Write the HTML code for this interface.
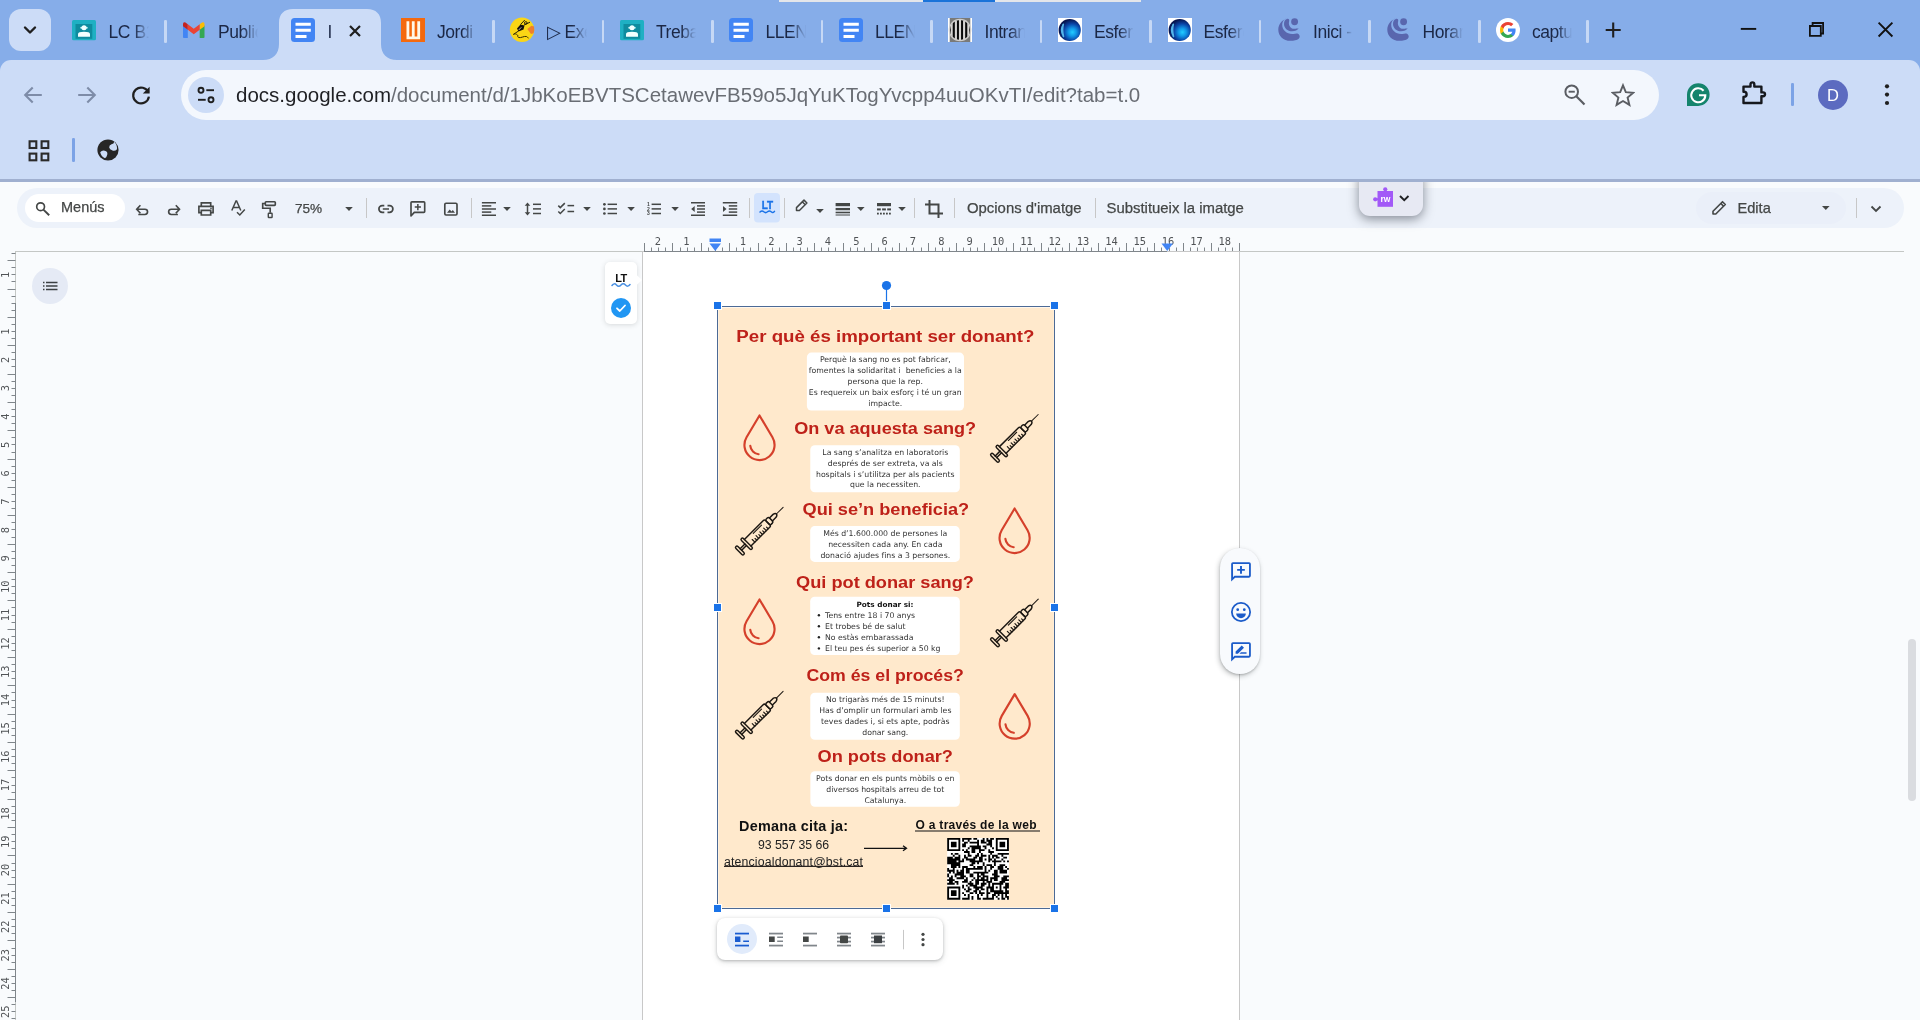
<!DOCTYPE html><html lang="ca"><head><meta charset="utf-8"><title>Docs</title><style>
*{box-sizing:border-box;margin:0;padding:0}
html,body{width:1920px;height:1020px;overflow:hidden;background:#F9FBFD;font-family:"Liberation Sans",sans-serif;}
.abs{position:absolute}
#frame{position:absolute;left:0;top:0;width:1920px;height:80px;background:#86ADE9}
#tb{position:absolute;left:0;top:60px;width:1920px;height:120px;background:#CCDCF7;border-radius:11px 11px 0 0}
#tbline{position:absolute;left:0;top:179.400px;width:1920px;height:2.400px;background:#A0B0D0}
.tabt{position:absolute;top:20px;height:24px;line-height:24px;font-size:17.5px;color:#1b2745;white-space:nowrap;overflow:hidden;letter-spacing:-0.45px}
.sep{position:absolute;top:19.5px;width:2.6px;height:23.500px;background:#C6D8F5;border-radius:1.300px}
.fav{position:absolute;top:18px;width:24px;height:24px}
#omni{position:absolute;left:180.500px;top:69.500px;width:1478.500px;height:50.500px;border-radius:25.250px;background:#F3F7FD}
#url{position:absolute;left:236px;top:80px;height:30px;line-height:30px;font-size:20.5px;color:#696D74;white-space:nowrap}
#url b{font-weight:normal;color:#1f2024}
#dtb{position:absolute;left:17px;top:188px;width:1887px;height:40px;border-radius:20px;background:#EDF2FA}
.dsep{position:absolute;top:198px;width:1px;height:20px;background:#C7C7C7}
.dtxt{position:absolute;top:198px;height:20px;line-height:20px;font-size:14px;color:#444746;white-space:nowrap;-webkit-text-stroke:0.250px #444746}
.ic{position:absolute}
</style></head><body><div id="root" style="position:absolute;left:0;top:0;width:1920px;height:1020px;will-change:transform">
<div id="frame"></div>
<div class="abs" style="left:779px;top:0;width:362px;height:2px;background:#E4E6EA"></div>
<div class="abs" style="left:923px;top:0;width:72px;height:2px;background:#1A73D9"></div>
<div id="tb"></div>
<div class="abs" style="left:9px;top:9px;width:42px;height:42px;border-radius:12px;background:#CCDCF7"></div>
<svg class="ic" style="left:20px;top:20px" width="20" height="20" viewBox="0 0 20 20"><path d="M5 7.5 L10 12.5 L15 7.5" fill="none" stroke="#1f1f1f" stroke-width="2.4" stroke-linecap="round" stroke-linejoin="round"/></svg>
<svg class="ic" style="left:263px;top:9px" width="134" height="51" viewBox="0 0 134 51"><path d="M0 51 C10 51 16 45 16 35 L16 14 C16 5 21 0 30 0 L104 0 C113 0 118 5 118 14 L118 35 C118 45 124 51 134 51 Z" fill="#CCDCF7"/></svg>
<!--TABS-->
<div class="tabt" style="left:108.5px;width:41px;-webkit-mask-image:linear-gradient(90deg,#000 25px,transparent 40px)">LC B1</div>
<div class="tabt" style="left:218px;width:41px;-webkit-mask-image:linear-gradient(90deg,#000 25px,transparent 40px)">Publicacions</div>
<div class="tabt" style="left:327.5px;width:8px;-webkit-mask-image:linear-gradient(90deg,#000 2px,transparent 7px)">I</div>
<div class="tabt" style="left:437px;width:41px;-webkit-mask-image:linear-gradient(90deg,#000 25px,transparent 40px)">Jordi</div>
<div class="tabt" style="left:546.5px;width:41px;-webkit-mask-image:linear-gradient(90deg,#000 25px,transparent 40px)">▷ Exercicis</div>
<div class="tabt" style="left:656px;width:41px;-webkit-mask-image:linear-gradient(90deg,#000 25px,transparent 40px)">Treballs</div>
<div class="tabt" style="left:765.5px;width:41px;-webkit-mask-image:linear-gradient(90deg,#000 25px,transparent 40px)">LLENGUA</div>
<div class="tabt" style="left:875px;width:41px;-webkit-mask-image:linear-gradient(90deg,#000 25px,transparent 40px)">LLENGUA</div>
<div class="tabt" style="left:984.5px;width:41px;-webkit-mask-image:linear-gradient(90deg,#000 25px,transparent 40px)">Intranet</div>
<div class="tabt" style="left:1094px;width:41px;-webkit-mask-image:linear-gradient(90deg,#000 25px,transparent 40px)">Esfer@</div>
<div class="tabt" style="left:1203.5px;width:41px;-webkit-mask-image:linear-gradient(90deg,#000 25px,transparent 40px)">Esfer@</div>
<div class="tabt" style="left:1313px;width:41px;-webkit-mask-image:linear-gradient(90deg,#000 25px,transparent 40px)">Inici -</div>
<div class="tabt" style="left:1422.5px;width:41px;-webkit-mask-image:linear-gradient(90deg,#000 25px,transparent 40px)">Horari</div>
<div class="tabt" style="left:1532px;width:41px;-webkit-mask-image:linear-gradient(90deg,#000 25px,transparent 40px)">captura</div>
<div class="sep" style="left:164.29999999999998px"></div>
<div class="sep" style="left:492.09999999999997px"></div>
<div class="sep" style="left:601.7px"></div>
<div class="sep" style="left:711.2px"></div>
<div class="sep" style="left:820.7px"></div>
<div class="sep" style="left:930.2px"></div>
<div class="sep" style="left:1039.7px"></div>
<div class="sep" style="left:1149.2px"></div>
<div class="sep" style="left:1258.7px"></div>
<div class="sep" style="left:1368.1000000000001px"></div>
<div class="sep" style="left:1478.1000000000001px"></div>
<div class="sep" style="left:1586.4px"></div>
<svg class="ic" style="left:72px;top:18px" width="24" height="24" viewBox="0 0 24 24"><rect x="0" y="2" width="24" height="20.200" rx="1.500" fill="#1FB0C3"/><rect x="3.500" y="6" width="16.800" height="14.800" fill="#0F8C9F"/><circle cx="12" cy="9.700" r="2.500" fill="#F2FFFF"/><circle cx="9.300" cy="9.700" r="1" fill="#D8F8FA"/><circle cx="14.700" cy="9.700" r="1" fill="#D8F8FA"/><path d="M6 18.700V16.200Q6 13.800 12 13.800T18 16.200V18.700Z" fill="#F2FFFF"/></svg>
<svg class="ic" style="left:620px;top:18px" width="24" height="24" viewBox="0 0 24 24"><rect x="0" y="2" width="24" height="20.200" rx="1.500" fill="#1FB0C3"/><rect x="3.500" y="6" width="16.800" height="14.800" fill="#0F8C9F"/><circle cx="12" cy="9.700" r="2.500" fill="#F2FFFF"/><circle cx="9.300" cy="9.700" r="1" fill="#D8F8FA"/><circle cx="14.700" cy="9.700" r="1" fill="#D8F8FA"/><path d="M6 18.700V16.200Q6 13.800 12 13.800T18 16.200V18.700Z" fill="#F2FFFF"/></svg>
<svg class="ic" style="left:183.2px;top:22px" width="21.5" height="16" viewBox="0 0 21.5 16"><path d="M0 3.200V15.200Q0 16 1 16H4.800V7.200Z" fill="#4285F4"/><path d="M21.500 3.200V15.200Q21.500 16 20.500 16H16.700V7.200Z" fill="#34A853"/><path d="M16.700 2.200L19 0.500Q21.500 -0.700 21.500 2.300V4.200L16.700 7.800Z" fill="#FBBC04"/><path d="M4.800 2.200L2.500 0.500Q0 -0.700 0 2.300V4.200L4.800 7.800Z" fill="#C5221F"/><path d="M4.800 2.200L10.750 6.700L16.700 2.200V7.800L10.750 12.300L4.800 7.800Z" fill="#EA4335"/></svg>
<svg class="ic" style="left:291px;top:18px" width="24" height="24" viewBox="0 0 24 24"><rect width="24" height="24" rx="3.500" fill="#4285F4"/><path d="M4.500 6.200H19.800M4.500 12.200H19.800M4.500 18.400H15.500" stroke="#fff" stroke-width="3"/></svg>
<svg class="ic" style="left:729px;top:18px" width="24" height="24" viewBox="0 0 24 24"><rect width="24" height="24" rx="3.500" fill="#4285F4"/><path d="M4.500 6.200H19.800M4.500 12.200H19.800M4.500 18.400H15.500" stroke="#fff" stroke-width="3"/></svg>
<svg class="ic" style="left:838.5px;top:18px" width="24" height="24" viewBox="0 0 24 24"><rect width="24" height="24" rx="3.500" fill="#4285F4"/><path d="M4.500 6.200H19.800M4.500 12.200H19.800M4.500 18.400H15.500" stroke="#fff" stroke-width="3"/></svg>
<svg class="ic" style="left:400.8px;top:18px" width="24.4" height="24" viewBox="0 0 24.4 24"><rect width="24.400" height="24" fill="#F4690E"/><path d="M6.900 3.300V19.800H17.700V3.300M12.250 3.300V19.800" fill="none" stroke="#FFF8E8" stroke-width="2.800"/></svg>
<svg class="ic" style="left:504px;top:12px" width="36" height="36" viewBox="0 0 36 36"><circle cx="18" cy="17.800" r="12.200" fill="#FAD615"/><path d="M23.300 17L27.500 13.800L30 14.600A12.200 12.200 0 0 1 29.600 21.300L27 22Z" fill="#EE7F2D"/><path d="M13 16.500L16.500 12.500L20.500 13.500L19.500 17.500L14.500 19.500Z" fill="#14110a"/><path d="M14.500 19L9.400 22.400M16.500 12.500L20.800 8M20 13L26 10.200" stroke="#14110a" stroke-width="0.900" fill="none"/><circle cx="21.800" cy="10.900" r="1.300" fill="none" stroke="#14110a" stroke-width="0.900"/><path d="M14.700 18L17.300 15.300" stroke="#fff" stroke-width="0.700"/><path d="M9.400 22.400C11 21.500 12.500 22 13.500 23C14.500 24 13 25 14.500 25.500C17 26.300 20 23.800 22.500 24.500C23.800 25 24 26 24.400 26.300" stroke="#3a3000" stroke-width="1" fill="none"/></svg>
<svg class="ic" style="left:948px;top:18px" width="24" height="24" viewBox="0 0 24 24"><defs><clipPath id="ci"><circle cx="12" cy="12" r="10.300"/></clipPath></defs><rect width="24" height="24" fill="#fff"/><rect x="1.700" width="20.600" height="24" fill="#7a7a78"/><circle cx="12" cy="12" r="11.300" fill="#CFCDCB"/><circle cx="12" cy="12" r="10" fill="#0a0a0a"/><g clip-path="url(#ci)" fill="#D8D6D4"><rect x="10.950" y="0" width="2.100" height="24"/><rect x="6.850" y="0" width="2.100" height="24"/><rect x="15.050" y="0" width="2.100" height="24"/><rect x="2.800" y="0" width="1.900" height="24"/><rect x="19.300" y="0" width="1.900" height="24"/></g></svg>
<svg class="ic" style="left:1058px;top:18px" width="24" height="24" viewBox="0 0 24 24"><defs><radialGradient id="ge1" cx="0.62" cy="0.6" r="0.58"><stop offset="0" stop-color="#22CCFF"/><stop offset="0.3" stop-color="#1098E8"/><stop offset="0.65" stop-color="#0A45A8"/><stop offset="1" stop-color="#061550"/></radialGradient></defs><rect width="24" height="24" fill="#fff"/><circle cx="11.700" cy="12" r="11.100" fill="url(#ge1)"/><path d="M5.300 6.300Q1.800 12 5.500 18.500Q3.800 12 5.300 6.300Z" fill="#5CC4F5" stroke="#5CC4F5" stroke-width="1.600" stroke-linejoin="round" opacity="0.900"/></svg>
<svg class="ic" style="left:1167.5px;top:18px" width="24" height="24" viewBox="0 0 24 24"><defs><radialGradient id="ge2" cx="0.62" cy="0.6" r="0.58"><stop offset="0" stop-color="#22CCFF"/><stop offset="0.3" stop-color="#1098E8"/><stop offset="0.65" stop-color="#0A45A8"/><stop offset="1" stop-color="#061550"/></radialGradient></defs><rect width="24" height="24" fill="#fff"/><circle cx="11.700" cy="12" r="11.100" fill="url(#ge2)"/><path d="M5.300 6.300Q1.800 12 5.500 18.500Q3.800 12 5.300 6.300Z" fill="#5CC4F5" stroke="#5CC4F5" stroke-width="1.600" stroke-linejoin="round" opacity="0.900"/></svg>
<svg class="ic" style="left:1272.75px;top:14px" width="32" height="32" viewBox="0 0 32 32"><g fill="#5966AE"><path d="M13.500 4.800C9 6 5.300 10.500 5.300 15.700C5.300 22 10.500 26.800 17.300 26.800C21 26.800 24 26.200 25.700 24.800C27.400 23.400 26.900 20.400 24.500 19.600C23 19.100 22 19.800 20.500 20C14.500 20.800 9.200 16.500 9.200 10.800C9.200 8.500 10.200 6.500 12 5Z"/><path d="M13.800 4.900C16.500 4.500 16.500 6.500 16 8C15.300 11 17.500 14.800 21 14.800C23 14.800 24.500 14.300 25.700 14.200C24.500 16 22 17.300 19 17.300C14.500 17.300 11 14 11 10C11 7.500 12 5.500 13.800 4.900Z"/><circle cx="21.600" cy="7.800" r="3.450"/></g></svg>
<svg class="ic" style="left:1382px;top:14px" width="32" height="32" viewBox="0 0 32 32"><g fill="#5966AE"><path d="M13.500 4.800C9 6 5.300 10.500 5.300 15.700C5.300 22 10.500 26.800 17.300 26.800C21 26.800 24 26.200 25.700 24.800C27.400 23.400 26.900 20.400 24.500 19.600C23 19.100 22 19.800 20.500 20C14.500 20.800 9.200 16.500 9.200 10.800C9.200 8.500 10.200 6.500 12 5Z"/><path d="M13.800 4.900C16.500 4.500 16.500 6.500 16 8C15.300 11 17.500 14.800 21 14.800C23 14.800 24.500 14.300 25.700 14.200C24.500 16 22 17.300 19 17.300C14.500 17.300 11 14 11 10C11 7.500 12 5.500 13.800 4.900Z"/><circle cx="21.600" cy="7.800" r="3.450"/></g></svg>
<svg class="ic" style="left:1496px;top:18px" width="24" height="24" viewBox="0 0 24 24"><circle cx="12" cy="12" r="12" fill="#fff"/><path d="M19.600 12.200c0-.6-.05-1.100-.15-1.600H12v3.100h4.300c-.2 1-.75 1.850-1.600 2.400v2h2.600c1.500-1.400 2.300-3.450 2.300-5.900z" fill="#4285F4"/><path d="M12 20c2.150 0 3.950-.7 5.300-1.900l-2.600-2c-.7.500-1.650.8-2.700.8-2.100 0-3.850-1.400-4.500-3.300H4.800v2.100C6.100 18.250 8.850 20 12 20z" fill="#34A853"/><path d="M7.500 13.600c-.15-.5-.25-1.050-.25-1.600s.1-1.100.25-1.600V8.300H4.800C4.300 9.400 4 10.650 4 12s.3 2.600.8 3.700l2.700-2.100z" fill="#FBBC05"/><path d="M12 7.100c1.200 0 2.250.4 3.100 1.200l2.300-2.300C16 4.700 14.150 4 12 4 8.850 4 6.100 5.750 4.800 8.300l2.700 2.100c.65-1.900 2.400-3.300 4.500-3.300z" fill="#EA4335"/></svg>
<svg class="ic" style="left:345px;top:21px" width="20" height="20" viewBox="0 0 20 20"><path d="M5 5 L15 15 M15 5 L5 15" stroke="#1f1f1f" stroke-width="2.2" stroke-linecap="butt"/></svg>
<svg class="ic" style="left:1602px;top:19px" width="22" height="22" viewBox="1602 19 22 22"><path d="M1613.200 22.500V37.500M1605.700 30H1620.700" stroke="#1f1f1f" stroke-width="2.100"/></svg>
<svg class="ic" style="left:1735px;top:16px" width="170" height="30" viewBox="1735 16 170 30"><path d="M1740.800 28.900H1756.200" stroke="#111" stroke-width="1.900"/><path d="M1809.900 26H1820.800V35.900H1809.900Z M1812.600 25.500V23H1823.100V33.500H1821" fill="none" stroke="#111" stroke-width="1.800"/><path d="M1878.600 22.700L1892.400 36.500M1892.400 22.700L1878.600 36.500" stroke="#111" stroke-width="1.900"/></svg>
<div id="omni"></div>
<div class="abs" style="left:188px;top:77px;width:36px;height:36px;border-radius:18px;background:#CCDCF7"></div>
<div id="url"><b>docs.google.com</b>/document/d/1JbKoEBVTSCetawevFB59o5JqYuKTogYvcpp4uuOKvTI/edit?tab=t.0</div>
<svg class="ic" style="left:21px;top:82.500px" width="24" height="24" viewBox="0 0 24 24"><path d="M20.800 12H4.500M11.700 4.500L4.200 12L11.700 19.500" fill="none" stroke="#7E8CA8" stroke-width="2.100"/></svg>
<svg class="ic" style="left:75px;top:82.500px" width="24" height="24" viewBox="0 0 24 24"><path d="M3.200 12H19.500M12.300 4.500L19.800 12L12.300 19.500" fill="none" stroke="#7E8CA8" stroke-width="2.100"/></svg>
<svg class="ic" style="left:129px;top:82.500px" width="24" height="24" viewBox="0 0 24 24"><path d="M19.400 9.500A7.900 7.900 0 1 0 19.900 13.600" fill="none" stroke="#1f1f1f" stroke-width="2.200"/><path d="M20.600 3.800V10.600H13.800Z" fill="#1f1f1f"/></svg>
<svg class="ic" style="left:195.500px;top:84.500px" width="20" height="20" viewBox="0 0 20 20"><g fill="none" stroke="#1f1f1f" stroke-width="1.900"><circle cx="5" cy="5.200" r="2.500"/><path d="M10.300 5.200H18"/><circle cx="15" cy="14.800" r="2.500"/><path d="M2 14.800H9.700"/></g></svg>
<svg class="ic" style="left:28px;top:139.500px" width="22" height="22" viewBox="0 0 22 22"><g fill="none" stroke="#2a2a2a" stroke-width="2.100"><rect x="1.600" y="1.300" width="6.700" height="6.700"/><rect x="13.600" y="1.300" width="6.700" height="6.700"/><rect x="1.600" y="13.600" width="6.700" height="6.700"/><rect x="13.600" y="13.600" width="6.700" height="6.700"/></g></svg>
<div class="abs" style="left:72.300px;top:138px;width:2.500px;height:24px;border-radius:1.200px;background:#7CA3E6"></div>
<svg class="ic" style="left:97px;top:139px" width="22" height="22" viewBox="0 0 22 22"><circle cx="11" cy="11" r="10.600" fill="#262626"/><path d="M3.200 13.300Q5 11 7.800 11.800Q10.800 12.600 10.300 15.400Q9.800 17.800 8 19.300Q4.200 17.600 3.200 13.300Z" fill="#CCDCF7"/><path d="M12.200 8.600Q12 6 14.500 5.300Q17 4.800 17.200 2.800Q20.300 5.400 20 10.300Q18 12.500 15.500 11.600Q12.500 10.800 12.200 8.600Z" fill="#CCDCF7"/></svg>
<svg class="ic" style="left:1563px;top:83px" width="24" height="24" viewBox="0 0 24 24"><circle cx="8.700" cy="8.700" r="6.300" fill="none" stroke="#5a5d63" stroke-width="2"/><path d="M13.300 13.300L21.500 21.500" stroke="#5a5d63" stroke-width="2.200"/><path d="M5.600 8.700H11.800" stroke="#5a5d63" stroke-width="1.900"/></svg>
<svg class="ic" style="left:1611px;top:82.500px" width="24" height="24" viewBox="0 0 24 24"><path d="M12 2.300L14.800 9.200L22.300 9.800L16.600 14.600L18.400 21.900L12 18L5.600 21.900L7.400 14.600L1.700 9.800L9.200 9.200Z" fill="none" stroke="#5a5d63" stroke-width="1.900" stroke-linejoin="miter"/></svg>
<svg class="ic" style="left:1686px;top:83px" width="24" height="24" viewBox="0 0 24 24"><path d="M12.300 0.300A11.300 11.300 0 1 1 12.300 22.900H1V11.600A11.300 11.300 0 0 1 12.300 0.300Z" fill="#15846C"/><path d="M17.600 7.700A7 7 0 1 0 19.300 12.200H13" fill="none" stroke="#fff" stroke-width="2.100"/></svg>
<svg class="ic" style="left:1741px;top:80px" width="27" height="26" viewBox="0 0 27 26"><path d="M2.500 6.600H9.500V4.300A1.900 1.900 0 0 1 13.300 4.300V6.600H20.400V12.400H22.100A1.900 1.900 0 0 1 22.100 16.200H20.400V23H2.500V16.900H3A2.600 2.600 0 0 0 3 11.700H2.500Z" fill="none" stroke="#16181d" stroke-width="2.400" stroke-linejoin="round"/></svg>
<div class="abs" style="left:1791.300px;top:83px;width:2.500px;height:23px;border-radius:1.200px;background:#7CA3E6"></div>
<div class="abs" style="left:1818px;top:80px;width:30px;height:30px;border-radius:15px;background:#5C6BC0;color:#fff;font-size:16.500px;line-height:30.500px;text-align:center">D</div>
<svg class="ic" style="left:1882px;top:82px" width="10" height="26" viewBox="0 0 10 26"><circle cx="5" cy="4.300" r="2.100" fill="#1f1f1f"/><circle cx="5" cy="12.600" r="2.100" fill="#1f1f1f"/><circle cx="5" cy="21" r="2.100" fill="#1f1f1f"/></svg>
<div id="tbline"></div>
<div id="dtb"></div>
<div class="abs" style="left:25px;top:194px;width:100px;height:28px;border-radius:14px;background:#fff"></div>
<div class="abs" style="left:1696px;top:192px;width:150px;height:32px;border-radius:16px;background:#EAEFF9"></div>
<div class="dtxt" style="left:61px;top:197px;font-size:14.5px">Menús</div>
<div class="dtxt" style="left:295px;top:199px;font-size:13.600px">75%</div>
<div class="dtxt" style="left:967px;font-size:14.9px">Opcions d'imatge</div>
<div class="dtxt" style="left:1106.5px;font-size:14.9px">Substitueix la imatge</div>
<div class="dtxt" style="left:1737.5px;font-size:14.6px">Edita</div>
<div class="dsep" style="left:366.0px"></div>
<div class="dsep" style="left:470.5px"></div>
<div class="dsep" style="left:749.0px"></div>
<div class="dsep" style="left:783.5px"></div>
<div class="dsep" style="left:914.0px"></div>
<div class="dsep" style="left:953.5px"></div>
<div class="dsep" style="left:1095.3px"></div>
<div class="dsep" style="left:1856.0px"></div>
<svg class="ic" style="left:0;top:182px" width="1920" height="60" viewBox="0 182 1920 60">
<g fill="none" stroke="#444746" stroke-width="1.650">
<circle cx="40.600" cy="206.700" r="3.900"/><path d="M43.400 209.600L49.200 215.300" stroke-width="1.900"/>
<path d="M140.400 205.200L136.700 209.200L140.400 213.200M137 209.200H144.900A2.650 2.650 0 0 1 144.900 214.500H138.300"/>
<path d="M175.800 205.200L179.500 209.200L175.800 213.200M179.200 209.200H171.300A2.650 2.650 0 0 0 171.300 214.500H177.900"/>
<path d="M201.300 206V202.800H210.700V206M201.300 212.600H198.900V206.300H213.100V212.600H210.700M201.300 210.300H210.700V215H201.300Z"/>
<path d="M231.800 210.500L236 201H236.600L240.800 210.500M233.300 207.500H239.300" stroke-width="1.500"/><path d="M237 212.300L239.800 215L244.800 209.600" stroke-width="1.500"/>
<rect x="265.300" y="201.700" width="10" height="3.600" rx="0.800"/><path d="M265.300 203.500H262.700V208.200H270.200V212.800"/><rect x="268.300" y="213.200" width="3.800" height="4.300" rx="0.600" stroke-width="1.400"/>
<path d="M384.300 205.700H382.200A3.300 3.300 0 0 0 382.200 212.300H384.300M387.500 205.700H389.600A3.300 3.300 0 0 1 389.600 212.300H387.500M382.800 209H389" stroke-width="1.700"/>
<path d="M411 216V202.700Q411 201.800 411.900 201.800H423.800Q424.700 201.800 424.700 202.700V211.500Q424.700 212.400 423.800 212.400H414.300Z" stroke-linejoin="round"/><path d="M417.850 204V210.200M414.750 207.100H420.950" stroke-width="1.500"/>
<rect x="444.800" y="203.200" width="12.200" height="11.800" rx="1.200"/>
</g>
<g fill="#444746">
<circle cx="211" cy="208.400" r="0.800"/>
<path d="M447 212.800L449.700 209.400L451.500 211.600L452.800 210L455 212.800Z"/>
<path d="M345.2 207h7.6l-3.8 4z"/><path d="M503.2 207h7.6l-3.8 4z"/><path d="M583.2 207h7.6l-3.8 4z"/><path d="M627.3 207h7.6l-3.8 4z"/><path d="M671.3 207h7.6l-3.8 4z"/><path d="M816.2 209h7.6l-3.8 4z"/><path d="M857 207h7.6l-3.8 4z"/><path d="M898.2 207h7.6l-3.8 4z"/><path d="M1822 206h7.6l-3.8 4z"/>
<rect x="481.9" y="202.00" width="14.10" height="1.5"/>
<rect x="481.9" y="205.15" width="9.40" height="1.5"/>
<rect x="481.9" y="208.25" width="14.10" height="1.5"/>
<rect x="481.9" y="211.35" width="9.40" height="1.5"/>
<rect x="481.9" y="214.50" width="14.10" height="1.5"/>
<rect x="533" y="203.55" width="8.00" height="1.5"/>
<rect x="533" y="208.15" width="8.00" height="1.5"/>
<rect x="533" y="212.75" width="8.00" height="1.5"/>
<path d="M527.500 202.600L530.300 205.800H528.250V212.200H530.300L527.500 215.400L524.700 212.200H526.750V205.800H524.700Z"/>
<rect x="567.5" y="204.85" width="6.60" height="1.5"/>
<rect x="567.5" y="210.75" width="6.60" height="1.5"/>
<circle cx="604.400" cy="204.3" r="1.350"/><rect x="607.6" y="203.55" width="9.40" height="1.5"/>
<circle cx="604.400" cy="208.9" r="1.350"/><rect x="607.6" y="208.15" width="9.40" height="1.5"/>
<circle cx="604.400" cy="213.5" r="1.350"/><rect x="607.6" y="212.75" width="9.40" height="1.5"/>
<rect x="651.6" y="203.55" width="9.40" height="1.5"/>
<rect x="651.6" y="208.15" width="9.40" height="1.5"/>
<rect x="651.6" y="212.75" width="9.40" height="1.5"/>
<g font-family="Liberation Sans, sans-serif" font-size="5" font-weight="bold" text-anchor="middle"><text x="648.300" y="206">1</text><text x="648.300" y="210.700">2</text><text x="648.300" y="215.400">3</text></g>
<rect x="691" y="202.00" width="14.00" height="1.5"/>
<rect x="697" y="205.15" width="8.00" height="1.5"/>
<rect x="697" y="208.25" width="8.00" height="1.5"/>
<rect x="697" y="211.35" width="8.00" height="1.5"/>
<rect x="691" y="214.50" width="14.00" height="1.5"/>
<path d="M694.700 206V212L691.200 209Z"/>
<rect x="722.8" y="202.00" width="14.40" height="1.5"/>
<rect x="728.8" y="205.15" width="8.40" height="1.5"/>
<rect x="728.8" y="208.25" width="8.40" height="1.5"/>
<rect x="728.8" y="211.35" width="8.40" height="1.5"/>
<rect x="722.8" y="214.50" width="14.40" height="1.5"/>
<path d="M723 206V212L726.500 209Z"/>
<rect x="835.6" y="203.00" width="14.40" height="3.2"/><rect x="835.6" y="207.95" width="14.40" height="2.3"/><rect x="835.6" y="211.70" width="14.40" height="1.6"/><rect x="835.6" y="214.50" width="14.40" height="1"/>
<rect x="877" y="203.00" width="14.00" height="3.2"/>
<rect x="877.0" y="208.40" width="3.80" height="2"/>
<rect x="882.1" y="208.40" width="3.80" height="2"/>
<rect x="887.2" y="208.40" width="3.80" height="2"/>
<rect x="877" y="212.70" width="1.80" height="1.8"/>
<rect x="880" y="212.70" width="1.80" height="1.8"/>
<rect x="883" y="212.70" width="1.80" height="1.8"/>
<rect x="886" y="212.70" width="1.80" height="1.8"/>
<rect x="889" y="212.70" width="1.80" height="1.8"/>
</g>
<path d="M558.300 205.600L560.300 207.600L564.800 203.100M558.300 211.500L560.300 213.500L564.800 209" fill="none" stroke="#444746" stroke-width="1.500"/>
<rect x="754" y="193" width="26" height="29.400" rx="4" fill="#D3E3FD"/>
<text x="767.300" y="208.600" font-family="Liberation Sans, sans-serif" font-size="10" font-weight="bold" fill="#1A73E8" stroke="#1A73E8" stroke-width="0.350" text-anchor="middle" letter-spacing="-0.3">LT</text>
<path d="M760 212Q762 210.200 763.800 211.800T767.500 211.800T771.200 211.800T774.500 211.400" fill="none" stroke="#1A73E8" stroke-width="1.500" stroke-linecap="round"/>
<path d="M796.500 210.500V207.600L804 200.100L806.900 203L799.400 210.500Z M802.300 201.800L805.200 204.700" fill="none" stroke="#444746" stroke-width="1.500" stroke-linejoin="round"/>
<path d="M929.500 200V213.500H943M925 204.500H938.500V218" fill="none" stroke="#444746" stroke-width="2"/>
<path d="M1713 214V211.200L1722.500 201.700L1725.300 204.500L1715.800 214Z" fill="none" stroke="#444746" stroke-width="1.600" stroke-linejoin="round"/><path d="M1720.800 203.400L1723.600 206.200" stroke="#444746" stroke-width="1.600"/>
<path d="M1871.500 206.500L1876 211L1880.500 206.500" fill="none" stroke="#444746" stroke-width="1.800"/>
</svg>
<div class="abs" style="left:1359px;top:172px;width:64px;height:44px;border-radius:0 0 11px 11px;background:#E7E9F3;box-shadow:0 3px 11px rgba(30,35,50,.5);clip-path:inset(10px -22px -26px -22px)"></div>
<svg class="ic" style="left:1370px;top:185px" width="42" height="24" viewBox="1370 185 42 24"><rect x="1377.500" y="191" width="15.500" height="15.800" fill="#A259F7"/><circle cx="1385.250" cy="189.300" r="2.100" fill="#A259F7"/><circle cx="1375.200" cy="199.300" r="2.100" fill="#A259F7"/><rect x="1375" y="198.200" width="3" height="2.200" fill="#A259F7"/><rect x="1384.200" y="189" width="2.100" height="2.500" fill="#A259F7"/><text x="1385.500" y="202.300" font-family="Liberation Sans, sans-serif" font-size="8.500" font-weight="bold" fill="#fff" text-anchor="middle">rw</text><path d="M1400 196L1404.250 200.200L1408.500 196" fill="none" stroke="#202124" stroke-width="1.900"/></svg>
<div class="abs" style="left:15px;top:251px;width:1889px;height:1px;background:#C4C7C5"></div>
<div class="abs" style="left:15px;top:251px;width:1px;height:52px;background:#C4C7C5"></div>
<div class="abs" style="left:15px;top:303px;width:1px;height:699px;background:#80868B"></div>
<div class="abs" style="left:15px;top:1002px;width:1px;height:18px;background:#C4C7C5"></div>
<div class="abs" style="left:642px;top:251px;width:598px;height:780px;background:#fff;border:1px solid #C8C8C8"></div>
<div class="abs" style="left:32px;top:268px;width:36px;height:36px;border-radius:18px;background:#E5EAF5"></div>
<svg class="ic" style="left:41px;top:277px" width="18" height="18" viewBox="0 0 18 18"><path d="M5 5.500 H16.500 M5 9 H16.500 M5 12.500 H16.500" stroke="#3c4043" stroke-width="1.5"/><path d="M2 5.500 H3.500 M2 9 H3.500 M2 12.500 H3.500" stroke="#3c4043" stroke-width="1.5"/></svg>
<svg class="ic" style="left:0;top:0" width="1920" height="1020" viewBox="0 0 1920 1020" font-family="Liberation Sans, sans-serif">
<path d="M651.5 247.500V251M658.5 247.500V251M665.5 247.500V251M680.5 247.500V251M687.5 247.500V251M694.5 247.500V251M708.5 247.500V251M715.5 247.500V251M722.5 247.500V251M736.5 247.500V251M743.5 247.500V251M750.5 247.500V251M765.5 247.500V251M772.5 247.500V251M779.5 247.500V251M793.5 247.500V251M800.5 247.500V251M807.5 247.500V251M821.5 247.500V251M828.5 247.500V251M835.5 247.500V251M850.5 247.500V251M857.5 247.500V251M864.5 247.500V251M878.5 247.500V251M885.5 247.500V251M892.5 247.500V251M906.5 247.500V251M913.5 247.500V251M921.5 247.500V251M935.5 247.500V251M942.5 247.500V251M949.5 247.500V251M963.5 247.500V251M970.5 247.500V251M977.5 247.500V251M991.5 247.500V251M998.5 247.500V251M1006.5 247.500V251M1020.5 247.500V251M1027.5 247.500V251M1034.5 247.500V251M1048.5 247.500V251M1055.5 247.500V251M1062.5 247.500V251M1076.5 247.500V251M1083.5 247.500V251M1091.5 247.500V251M1105.5 247.500V251M1112.5 247.500V251M1119.5 247.500V251M1133.5 247.500V251M1140.5 247.500V251M1147.5 247.500V251M1161.5 247.500V251M1169.5 247.500V251M1176.5 247.500V251M1190.5 247.500V251M1197.5 247.500V251M1204.5 247.500V251M1218.5 247.500V251M1225.5 247.500V251M1232.5 247.500V251M644.5 243V251M672.5 243V251M701.5 243V251M729.5 243V251M758.5 243V251M786.5 243V251M814.5 243V251M843.5 243V251M871.5 243V251M899.5 243V251M928.5 243V251M956.5 243V251M984.5 243V251M1013.5 243V251M1041.5 243V251M1069.5 243V251M1098.5 243V251M1126.5 243V251M1154.5 243V251M1183.5 243V251M1211.5 243V251M1239.5 243V251" stroke="#80868B" stroke-width="1" fill="none"/>
<path d="M644 251.500H1167" stroke="#80868B" stroke-width="1"/>
<g font-family="DejaVu Sans Mono, monospace" font-size="10.400" fill="#505356" text-anchor="middle"><text x="657.9" y="244.900">2</text><text x="686.3" y="244.900">1</text><text x="742.9" y="244.900">1</text><text x="771.3" y="244.900">2</text><text x="799.6" y="244.900">3</text><text x="828.0" y="244.900">4</text><text x="856.3" y="244.900">5</text><text x="884.7" y="244.900">6</text><text x="913.0" y="244.900">7</text><text x="941.4" y="244.900">8</text><text x="969.7" y="244.900">9</text><text x="998.1" y="244.900">10</text><text x="1026.4" y="244.900">11</text><text x="1054.8" y="244.900">12</text><text x="1083.1" y="244.900">13</text><text x="1111.4" y="244.900">14</text><text x="1139.8" y="244.900">15</text><text x="1168.1" y="244.900">16</text><text x="1196.5" y="244.900">17</text><text x="1224.8" y="244.900">18</text></g>
<path d="M709.500 238.500h11.500v3.500h-11.500z M709.500 243.500h11.500l-5.750 7.500z" fill="#4285F4"/>
<path d="M1161.500 243.500h11.500l-5.750 7.500z" fill="#4285F4"/>
<path d="M11.500 253.5H15.500M11.500 267.5H15.500M11.500 274.5H15.500M11.500 281.5H15.500M11.500 296.5H15.500M11.500 303.5H15.500M11.500 310.5H15.500M11.500 324.5H15.500M11.500 331.5H15.500M11.500 338.5H15.500M11.500 352.5H15.500M11.500 359.5H15.500M11.500 366.5H15.500M11.500 381.5H15.500M11.500 388.5H15.500M11.500 395.5H15.500M11.500 409.5H15.500M11.500 416.5H15.500M11.500 423.5H15.500M11.500 437.5H15.500M11.500 444.5H15.500M11.500 452.5H15.500M11.500 466.5H15.500M11.500 473.5H15.500M11.500 480.5H15.500M11.500 494.5H15.500M11.500 501.5H15.500M11.500 508.5H15.500M11.500 522.5H15.500M11.500 529.5H15.500M11.500 537.5H15.500M11.500 551.5H15.500M11.500 558.5H15.500M11.500 565.5H15.500M11.500 579.5H15.500M11.500 586.5H15.500M11.500 593.5H15.500M11.500 607.5H15.500M11.500 615.5H15.500M11.500 622.5H15.500M11.500 636.5H15.500M11.500 643.5H15.500M11.500 650.5H15.500M11.500 664.5H15.500M11.500 671.5H15.500M11.500 678.5H15.500M11.500 692.5H15.500M11.500 700.5H15.500M11.500 707.5H15.500M11.500 721.5H15.500M11.500 728.5H15.500M11.500 735.5H15.500M11.500 749.5H15.500M11.500 756.5H15.500M11.500 763.5H15.500M11.500 777.5H15.500M11.500 785.5H15.500M11.500 792.5H15.500M11.500 806.5H15.500M11.500 813.5H15.500M11.500 820.5H15.500M11.500 834.5H15.500M11.500 841.5H15.500M11.500 848.5H15.500M11.500 863.5H15.500M11.500 870.5H15.500M11.500 877.5H15.500M11.500 891.5H15.500M11.500 898.5H15.500M11.500 905.5H15.500M11.500 919.5H15.500M11.500 926.5H15.500M11.500 933.5H15.500M11.500 948.5H15.500M11.500 955.5H15.500M11.500 962.5H15.500M11.500 976.5H15.500M11.500 983.5H15.500M11.500 990.5H15.500M11.500 1004.5H15.500M11.500 1011.5H15.500M11.500 1018.5H15.500M7.500 260.5H15.500M7.500 289.5H15.500M7.500 317.5H15.500M7.500 345.5H15.500M7.500 374.5H15.500M7.500 402.5H15.500M7.500 430.5H15.500M7.500 459.5H15.500M7.500 487.5H15.500M7.500 515.5H15.500M7.500 544.5H15.500M7.500 572.5H15.500M7.500 600.5H15.500M7.500 629.5H15.500M7.500 657.5H15.500M7.500 685.5H15.500M7.500 714.5H15.500M7.500 742.5H15.500M7.500 770.5H15.500M7.500 799.5H15.500M7.500 827.5H15.500M7.500 855.5H15.500M7.500 884.5H15.500M7.500 912.5H15.500M7.500 940.5H15.500M7.500 969.5H15.500M7.500 997.5H15.500" stroke="#80868B" stroke-width="1" fill="none"/>
<g font-family="DejaVu Sans Mono, monospace" font-size="10.400" fill="#505356" text-anchor="middle"><text transform="translate(9 274.9) rotate(-90)">1</text><text transform="translate(9 331.5) rotate(-90)">1</text><text transform="translate(9 359.9) rotate(-90)">2</text><text transform="translate(9 388.2) rotate(-90)">3</text><text transform="translate(9 416.6) rotate(-90)">4</text><text transform="translate(9 444.9) rotate(-90)">5</text><text transform="translate(9 473.3) rotate(-90)">6</text><text transform="translate(9 501.6) rotate(-90)">7</text><text transform="translate(9 530.0) rotate(-90)">8</text><text transform="translate(9 558.3) rotate(-90)">9</text><text transform="translate(9 586.7) rotate(-90)">10</text><text transform="translate(9 615.0) rotate(-90)">11</text><text transform="translate(9 643.4) rotate(-90)">12</text><text transform="translate(9 671.7) rotate(-90)">13</text><text transform="translate(9 700.0) rotate(-90)">14</text><text transform="translate(9 728.4) rotate(-90)">15</text><text transform="translate(9 756.7) rotate(-90)">16</text><text transform="translate(9 785.1) rotate(-90)">17</text><text transform="translate(9 813.4) rotate(-90)">18</text><text transform="translate(9 841.8) rotate(-90)">19</text><text transform="translate(9 870.1) rotate(-90)">20</text><text transform="translate(9 898.5) rotate(-90)">21</text><text transform="translate(9 926.8) rotate(-90)">22</text><text transform="translate(9 955.2) rotate(-90)">23</text><text transform="translate(9 983.5) rotate(-90)">24</text><text transform="translate(9 1011.8) rotate(-90)">25</text></g>
<rect x="718.400" y="307.600" width="335.400" height="600" fill="#FFE9CC"/>
<text transform="translate(736.3 341.8) scale(1.1003 1)" font-size="17.0" font-weight="bold" fill="#BE2119">Per què és important ser donant?</text>
<text transform="translate(794.2 433.5) scale(1.0649 1)" font-size="17.0" font-weight="bold" fill="#BE2119">On va aquesta sang?</text>
<text transform="translate(802.5 514.9) scale(1.0696 1)" font-size="17.0" font-weight="bold" fill="#BE2119">Qui se’n beneficia?</text>
<text transform="translate(796.0 587.9) scale(1.0709 1)" font-size="17.0" font-weight="bold" fill="#BE2119">Qui pot donar sang?</text>
<text transform="translate(806.5 681.0) scale(1.0419 1)" font-size="17.0" font-weight="bold" fill="#BE2119">Com és el procés?</text>
<text transform="translate(817.5 762.1) scale(1.0708 1)" font-size="17.0" font-weight="bold" fill="#BE2119">On pots donar?</text>
<rect x="806.9" y="352.6" width="157.1" height="57.9" rx="4.500" fill="#fff"/>
<rect x="810.3" y="445.2" width="149.5" height="47.1" rx="4.500" fill="#fff"/>
<rect x="810.2" y="526.1" width="149.6" height="35.8" rx="4.500" fill="#fff"/>
<rect x="810.2" y="596.8" width="149.6" height="58.3" rx="4.500" fill="#fff"/>
<rect x="810.3" y="692.8" width="149.5" height="47.0" rx="4.500" fill="#fff"/>
<rect x="810.4" y="771.3" width="149.4" height="35.4" rx="4.500" fill="#fff"/>
<g font-family="DejaVu Sans, sans-serif" font-size="7.75" fill="#343434" text-anchor="middle">
<text x="885.3" y="362.3">Perquè la sang no es pot fabricar,</text>
<text x="885.3" y="373.2">fomentes la solidaritat i&#160; beneficies a la</text>
<text x="885.3" y="384.0">persona que la rep.</text>
<text x="885.3" y="394.9">Es requereix un baix esforç i té un gran</text>
<text x="885.3" y="405.8">impacte.</text>
</g>
<g font-family="DejaVu Sans, sans-serif" font-size="7.75" fill="#343434" text-anchor="middle">
<text x="885.3" y="454.7">La sang s’analitza en laboratoris</text>
<text x="885.3" y="465.6">després de ser extreta, va als</text>
<text x="885.3" y="476.5">hospitals i s’utilitza per als pacients</text>
<text x="885.3" y="487.4">que la necessiten.</text>
</g>
<g font-family="DejaVu Sans, sans-serif" font-size="7.75" fill="#343434" text-anchor="middle">
<text x="885.3" y="535.7">Més d’1.600.000 de persones la</text>
<text x="885.3" y="546.7">necessiten cada any. En cada</text>
<text x="885.3" y="557.6">donació ajudes fins a 3 persones.</text>
</g>
<g font-family="DejaVu Sans, sans-serif" font-size="7.750" fill="#343434">
<text x="885" y="606.750" text-anchor="middle" font-weight="bold" font-size="7.300" fill="#111">Pots donar si:</text>
<circle cx="818.900" cy="615.2" r="1.200" fill="#222"/><text x="825" y="617.7">Tens entre 18 i 70 anys</text>
<circle cx="818.900" cy="626.2" r="1.200" fill="#222"/><text x="825" y="628.8">Et trobes bé de salut</text>
<circle cx="818.900" cy="637.3" r="1.200" fill="#222"/><text x="825" y="639.8">No estàs embarassada</text>
<circle cx="818.900" cy="648.4" r="1.200" fill="#222"/><text x="825" y="650.9">El teu pes és superior a 50 kg</text>
</g>
<g font-family="DejaVu Sans, sans-serif" font-size="7.75" fill="#343434" text-anchor="middle">
<text x="885.3" y="702.2">No trigaràs més de 15 minuts!</text>
<text x="885.3" y="713.2">Has d’omplir un formulari amb les</text>
<text x="885.3" y="724.1">teves dades i, si ets apte, podràs</text>
<text x="885.3" y="735.1">donar sang.</text>
</g>
<g font-family="DejaVu Sans, sans-serif" font-size="7.75" fill="#343434" text-anchor="middle">
<text x="885.3" y="780.7">Pots donar en els punts mòbils o en</text>
<text x="885.3" y="791.7">diversos hospitals arreu de tot</text>
<text x="885.3" y="802.7">Catalunya.</text>
</g>
<text x="739" y="831.400" font-size="14.400" font-weight="bold" fill="#111" textLength="109" lengthAdjust="spacing">Demana cita ja:</text>
<text x="758" y="848.700" font-size="12.300" fill="#222" textLength="71" lengthAdjust="spacing">93 557 35 66</text>
<text x="724" y="865.600" font-size="12.300" fill="#222" textLength="139" lengthAdjust="spacing">atencioaldonant@bst.cat</text>
<path d="M724 866.300H863" stroke="#2a2320" stroke-width="1.150"/>
<text x="915.500" y="828.900" font-size="12" font-weight="bold" fill="#111" textLength="121" lengthAdjust="spacing">O a través de la web</text>
<path d="M915 831H1040" stroke="#111" stroke-width="1.100"/>
<path d="M864 848.300H906.500M903 845.800l3.500 2.500l-3.500 2.500" stroke="#111" stroke-width="1.300" fill="none"/>
<g transform="translate(995 457.7) rotate(-45)" fill="none" stroke="#1c1712" stroke-width="1.450" stroke-linecap="round" stroke-linejoin="round"><rect x="-1.400" y="-5.600" width="2.800" height="11.200" rx="1.400"/><path d="M1.400 -1.100H8.200M1.400 1.100H8.200"/><rect x="8.200" y="-7.400" width="2.800" height="14.800" rx="1.400"/><path d="M11 -4.650H37.500Q39.300 -4.650 39.300 -3V3Q39.300 4.650 37.500 4.650H11"/><path d="M16.5 4.650V0.95M19.2 4.650V2.25M21.9 4.650V0.95M24.6 4.650V2.25M27.3 4.650V0.95M30 4.650V2.25M32.7 4.650V0.95M35.4 4.650V2.25" stroke-width="1.150"/><path d="M21.600 -2.700H33.300" stroke-width="1.100"/><rect x="39.300" y="-3.600" width="4.600" height="7.200" rx="1.600"/><path d="M43.900 -2.100H49Q51.600 -1.600 51.600 0Q51.600 1.600 49 2.100H43.900"/><path d="M51.600 0H61.100" stroke-width="1"/></g>
<g transform="translate(739.9 550.5) rotate(-45)" fill="none" stroke="#1c1712" stroke-width="1.450" stroke-linecap="round" stroke-linejoin="round"><rect x="-1.400" y="-5.600" width="2.800" height="11.200" rx="1.400"/><path d="M1.400 -1.100H8.200M1.400 1.100H8.200"/><rect x="8.200" y="-7.400" width="2.800" height="14.800" rx="1.400"/><path d="M11 -4.650H37.500Q39.300 -4.650 39.300 -3V3Q39.300 4.650 37.500 4.650H11"/><path d="M16.5 4.650V0.95M19.2 4.650V2.25M21.9 4.650V0.95M24.6 4.650V2.25M27.3 4.650V0.95M30 4.650V2.25M32.7 4.650V0.95M35.4 4.650V2.25" stroke-width="1.150"/><path d="M21.600 -2.700H33.300" stroke-width="1.100"/><rect x="39.300" y="-3.600" width="4.600" height="7.200" rx="1.600"/><path d="M43.900 -2.100H49Q51.600 -1.600 51.600 0Q51.600 1.600 49 2.100H43.900"/><path d="M51.600 0H61.100" stroke-width="1"/></g>
<g transform="translate(995 642.3) rotate(-45)" fill="none" stroke="#1c1712" stroke-width="1.450" stroke-linecap="round" stroke-linejoin="round"><rect x="-1.400" y="-5.600" width="2.800" height="11.200" rx="1.400"/><path d="M1.400 -1.100H8.200M1.400 1.100H8.200"/><rect x="8.200" y="-7.400" width="2.800" height="14.800" rx="1.400"/><path d="M11 -4.650H37.500Q39.300 -4.650 39.300 -3V3Q39.300 4.650 37.500 4.650H11"/><path d="M16.5 4.650V0.95M19.2 4.650V2.25M21.9 4.650V0.95M24.6 4.650V2.25M27.3 4.650V0.95M30 4.650V2.25M32.7 4.650V0.95M35.4 4.650V2.25" stroke-width="1.150"/><path d="M21.600 -2.700H33.300" stroke-width="1.100"/><rect x="39.300" y="-3.600" width="4.600" height="7.200" rx="1.600"/><path d="M43.900 -2.100H49Q51.600 -1.600 51.600 0Q51.600 1.600 49 2.100H43.900"/><path d="M51.600 0H61.100" stroke-width="1"/></g>
<g transform="translate(739.9 734.5999999999999) rotate(-45)" fill="none" stroke="#1c1712" stroke-width="1.450" stroke-linecap="round" stroke-linejoin="round"><rect x="-1.400" y="-5.600" width="2.800" height="11.200" rx="1.400"/><path d="M1.400 -1.100H8.200M1.400 1.100H8.200"/><rect x="8.200" y="-7.400" width="2.800" height="14.800" rx="1.400"/><path d="M11 -4.650H37.500Q39.300 -4.650 39.300 -3V3Q39.300 4.650 37.500 4.650H11"/><path d="M16.5 4.650V0.95M19.2 4.650V2.25M21.9 4.650V0.95M24.6 4.650V2.25M27.3 4.650V0.95M30 4.650V2.25M32.7 4.650V0.95M35.4 4.650V2.25" stroke-width="1.150"/><path d="M21.600 -2.700H33.300" stroke-width="1.100"/><rect x="39.300" y="-3.600" width="4.600" height="7.200" rx="1.600"/><path d="M43.900 -2.100H49Q51.600 -1.600 51.600 0Q51.600 1.600 49 2.100H43.900"/><path d="M51.600 0H61.100" stroke-width="1"/></g>
<g fill="none" stroke="#D5402B" stroke-width="2.150" stroke-linecap="round" stroke-linejoin="round"><path d="M759.5 415.50L772.44 437.32A15.05 15.05 0 1 1 746.56 437.32Z"/><path d="M750.30 445.80A9.300 9.300 0 0 0 758.60 454.20"/></g>
<g fill="none" stroke="#D5402B" stroke-width="2.150" stroke-linecap="round" stroke-linejoin="round"><path d="M1014.6 508.50L1027.54 530.32A15.05 15.05 0 1 1 1001.66 530.32Z"/><path d="M1005.40 538.80A9.300 9.300 0 0 0 1013.70 547.20"/></g>
<g fill="none" stroke="#D5402B" stroke-width="2.150" stroke-linecap="round" stroke-linejoin="round"><path d="M759.5 599.50L772.44 621.32A15.05 15.05 0 1 1 746.56 621.32Z"/><path d="M750.30 629.80A9.300 9.300 0 0 0 758.60 638.20"/></g>
<g fill="none" stroke="#D5402B" stroke-width="2.150" stroke-linecap="round" stroke-linejoin="round"><path d="M1014.7 694.10L1027.64 715.92A15.05 15.05 0 1 1 1001.76 715.92Z"/><path d="M1005.50 724.40A9.300 9.300 0 0 0 1013.80 732.80"/></g>
<g transform="translate(947.2 838)"><rect x="0" y="0" width="61.7" height="61.7" fill="#fff"/><path d="M0.00 0.00h13.09v1.87h-13.09zM14.96 0.00h9.35v1.87h-9.35zM26.18 0.00h3.74v1.87h-3.74zM35.52 0.00h1.87v1.87h-1.87zM39.26 0.00h1.87v1.87h-1.87zM43.00 0.00h3.74v1.87h-3.74zM48.61 0.00h13.09v1.87h-13.09zM0.00 1.87h1.87v1.87h-1.87zM11.22 1.87h1.87v1.87h-1.87zM14.96 1.87h1.87v1.87h-1.87zM20.57 1.87h1.87v1.87h-1.87zM29.92 1.87h1.87v1.87h-1.87zM33.65 1.87h3.74v1.87h-3.74zM39.26 1.87h5.61v1.87h-5.61zM48.61 1.87h1.87v1.87h-1.87zM59.83 1.87h1.87v1.87h-1.87zM0.00 3.74h1.87v1.87h-1.87zM3.74 3.74h5.61v1.87h-5.61zM11.22 3.74h1.87v1.87h-1.87zM16.83 3.74h3.74v1.87h-3.74zM22.44 3.74h9.35v1.87h-9.35zM33.65 3.74h5.61v1.87h-5.61zM41.13 3.74h3.74v1.87h-3.74zM48.61 3.74h1.87v1.87h-1.87zM52.35 3.74h5.61v1.87h-5.61zM59.83 3.74h1.87v1.87h-1.87zM0.00 5.61h1.87v1.87h-1.87zM3.74 5.61h5.61v1.87h-5.61zM11.22 5.61h1.87v1.87h-1.87zM14.96 5.61h3.74v1.87h-3.74zM29.92 5.61h1.87v1.87h-1.87zM39.26 5.61h5.61v1.87h-5.61zM48.61 5.61h1.87v1.87h-1.87zM52.35 5.61h5.61v1.87h-5.61zM59.83 5.61h1.87v1.87h-1.87zM0.00 7.48h1.87v1.87h-1.87zM3.74 7.48h5.61v1.87h-5.61zM11.22 7.48h1.87v1.87h-1.87zM14.96 7.48h3.74v1.87h-3.74zM22.44 7.48h11.22v1.87h-11.22zM35.52 7.48h3.74v1.87h-3.74zM43.00 7.48h1.87v1.87h-1.87zM48.61 7.48h1.87v1.87h-1.87zM52.35 7.48h5.61v1.87h-5.61zM59.83 7.48h1.87v1.87h-1.87zM0.00 9.35h1.87v1.87h-1.87zM11.22 9.35h1.87v1.87h-1.87zM20.57 9.35h1.87v1.87h-1.87zM24.31 9.35h9.35v1.87h-9.35zM37.39 9.35h1.87v1.87h-1.87zM44.87 9.35h1.87v1.87h-1.87zM48.61 9.35h1.87v1.87h-1.87zM59.83 9.35h1.87v1.87h-1.87zM0.00 11.22h13.09v1.87h-13.09zM14.96 11.22h1.87v1.87h-1.87zM18.70 11.22h1.87v1.87h-1.87zM24.31 11.22h3.74v1.87h-3.74zM31.78 11.22h5.61v1.87h-5.61zM41.13 11.22h1.87v1.87h-1.87zM48.61 11.22h13.09v1.87h-13.09zM16.83 13.09h5.61v1.87h-5.61zM24.31 13.09h3.74v1.87h-3.74zM31.78 13.09h1.87v1.87h-1.87zM41.13 13.09h5.61v1.87h-5.61zM3.74 14.96h1.87v1.87h-1.87zM7.48 14.96h3.74v1.87h-3.74zM20.57 14.96h1.87v1.87h-1.87zM29.92 14.96h1.87v1.87h-1.87zM33.65 14.96h1.87v1.87h-1.87zM43.00 14.96h1.87v1.87h-1.87zM50.48 14.96h11.22v1.87h-11.22zM5.61 16.83h1.87v1.87h-1.87zM11.22 16.83h1.87v1.87h-1.87zM16.83 16.83h1.87v1.87h-1.87zM20.57 16.83h3.74v1.87h-3.74zM28.05 16.83h3.74v1.87h-3.74zM33.65 16.83h5.61v1.87h-5.61zM41.13 16.83h1.87v1.87h-1.87zM44.87 16.83h5.61v1.87h-5.61zM54.22 16.83h1.87v1.87h-1.87zM0.00 18.70h5.61v1.87h-5.61zM7.48 18.70h5.61v1.87h-5.61zM16.83 18.70h3.74v1.87h-3.74zM26.18 18.70h3.74v1.87h-3.74zM31.78 18.70h3.74v1.87h-3.74zM41.13 18.70h1.87v1.87h-1.87zM44.87 18.70h1.87v1.87h-1.87zM48.61 18.70h3.74v1.87h-3.74zM56.09 18.70h3.74v1.87h-3.74zM0.00 20.57h13.09v1.87h-13.09zM14.96 20.57h1.87v1.87h-1.87zM18.70 20.57h9.35v1.87h-9.35zM31.78 20.57h3.74v1.87h-3.74zM37.39 20.57h1.87v1.87h-1.87zM41.13 20.57h3.74v1.87h-3.74zM46.74 20.57h1.87v1.87h-1.87zM54.22 20.57h1.87v1.87h-1.87zM0.00 22.44h9.35v1.87h-9.35zM11.22 22.44h5.61v1.87h-5.61zM22.44 22.44h13.09v1.87h-13.09zM41.13 22.44h1.87v1.87h-1.87zM44.87 22.44h9.35v1.87h-9.35zM56.09 22.44h1.87v1.87h-1.87zM59.83 22.44h1.87v1.87h-1.87zM0.00 24.31h13.09v1.87h-13.09zM24.31 24.31h3.74v1.87h-3.74zM29.92 24.31h1.87v1.87h-1.87zM35.52 24.31h1.87v1.87h-1.87zM46.74 24.31h1.87v1.87h-1.87zM3.74 26.18h9.35v1.87h-9.35zM22.44 26.18h3.74v1.87h-3.74zM35.52 26.18h1.87v1.87h-1.87zM39.26 26.18h5.61v1.87h-5.61zM46.74 26.18h1.87v1.87h-1.87zM52.35 26.18h5.61v1.87h-5.61zM3.74 28.05h5.61v1.87h-5.61zM11.22 28.05h1.87v1.87h-1.87zM14.96 28.05h5.61v1.87h-5.61zM26.18 28.05h1.87v1.87h-1.87zM29.92 28.05h5.61v1.87h-5.61zM37.39 28.05h1.87v1.87h-1.87zM43.00 28.05h3.74v1.87h-3.74zM50.48 28.05h5.61v1.87h-5.61zM57.96 28.05h1.87v1.87h-1.87zM0.00 29.92h1.87v1.87h-1.87zM5.61 29.92h1.87v1.87h-1.87zM14.96 29.92h1.87v1.87h-1.87zM18.70 29.92h16.83v1.87h-16.83zM37.39 29.92h1.87v1.87h-1.87zM43.00 29.92h1.87v1.87h-1.87zM50.48 29.92h5.61v1.87h-5.61zM59.83 29.92h1.87v1.87h-1.87zM0.00 31.78h7.48v1.87h-7.48zM9.35 31.78h1.87v1.87h-1.87zM13.09 31.78h3.74v1.87h-3.74zM18.70 31.78h3.74v1.87h-3.74zM37.39 31.78h1.87v1.87h-1.87zM41.13 31.78h1.87v1.87h-1.87zM46.74 31.78h3.74v1.87h-3.74zM52.35 31.78h7.48v1.87h-7.48zM1.87 33.65h1.87v1.87h-1.87zM5.61 33.65h1.87v1.87h-1.87zM9.35 33.65h7.48v1.87h-7.48zM18.70 33.65h3.74v1.87h-3.74zM26.18 33.65h14.96v1.87h-14.96zM46.74 33.65h3.74v1.87h-3.74zM52.35 33.65h7.48v1.87h-7.48zM0.00 35.52h1.87v1.87h-1.87zM7.48 35.52h9.35v1.87h-9.35zM22.44 35.52h3.74v1.87h-3.74zM29.92 35.52h1.87v1.87h-1.87zM33.65 35.52h3.74v1.87h-3.74zM44.87 35.52h5.61v1.87h-5.61zM0.00 37.39h1.87v1.87h-1.87zM3.74 37.39h1.87v1.87h-1.87zM7.48 37.39h1.87v1.87h-1.87zM13.09 37.39h5.61v1.87h-5.61zM22.44 37.39h3.74v1.87h-3.74zM29.92 37.39h3.74v1.87h-3.74zM35.52 37.39h5.61v1.87h-5.61zM46.74 37.39h5.61v1.87h-5.61zM56.09 37.39h5.61v1.87h-5.61zM1.87 39.26h3.74v1.87h-3.74zM9.35 39.26h7.48v1.87h-7.48zM18.70 39.26h1.87v1.87h-1.87zM26.18 39.26h1.87v1.87h-1.87zM29.92 39.26h1.87v1.87h-1.87zM33.65 39.26h3.74v1.87h-3.74zM39.26 39.26h1.87v1.87h-1.87zM43.00 39.26h7.48v1.87h-7.48zM54.22 39.26h5.61v1.87h-5.61zM0.00 41.13h7.48v1.87h-7.48zM16.83 41.13h3.74v1.87h-3.74zM24.31 41.13h1.87v1.87h-1.87zM28.05 41.13h13.09v1.87h-13.09zM43.00 41.13h1.87v1.87h-1.87zM46.74 41.13h3.74v1.87h-3.74zM54.22 41.13h7.48v1.87h-7.48zM1.87 43.00h3.74v1.87h-3.74zM7.48 43.00h3.74v1.87h-3.74zM14.96 43.00h5.61v1.87h-5.61zM22.44 43.00h1.87v1.87h-1.87zM28.05 43.00h3.74v1.87h-3.74zM35.52 43.00h1.87v1.87h-1.87zM39.26 43.00h5.61v1.87h-5.61zM52.35 43.00h5.61v1.87h-5.61zM0.00 44.87h7.48v1.87h-7.48zM9.35 44.87h1.87v1.87h-1.87zM20.57 44.87h5.61v1.87h-5.61zM28.05 44.87h3.74v1.87h-3.74zM33.65 44.87h5.61v1.87h-5.61zM41.13 44.87h1.87v1.87h-1.87zM44.87 44.87h11.22v1.87h-11.22zM57.96 44.87h3.74v1.87h-3.74zM14.96 46.74h1.87v1.87h-1.87zM18.70 46.74h1.87v1.87h-1.87zM22.44 46.74h7.48v1.87h-7.48zM33.65 46.74h3.74v1.87h-3.74zM41.13 46.74h1.87v1.87h-1.87zM44.87 46.74h1.87v1.87h-1.87zM52.35 46.74h1.87v1.87h-1.87zM57.96 46.74h3.74v1.87h-3.74zM0.00 48.61h13.09v1.87h-13.09zM14.96 48.61h1.87v1.87h-1.87zM20.57 48.61h1.87v1.87h-1.87zM26.18 48.61h9.35v1.87h-9.35zM39.26 48.61h7.48v1.87h-7.48zM48.61 48.61h1.87v1.87h-1.87zM52.35 48.61h1.87v1.87h-1.87zM56.09 48.61h5.61v1.87h-5.61zM0.00 50.48h1.87v1.87h-1.87zM11.22 50.48h1.87v1.87h-1.87zM16.83 50.48h1.87v1.87h-1.87zM20.57 50.48h3.74v1.87h-3.74zM28.05 50.48h3.74v1.87h-3.74zM33.65 50.48h3.74v1.87h-3.74zM39.26 50.48h1.87v1.87h-1.87zM43.00 50.48h3.74v1.87h-3.74zM52.35 50.48h1.87v1.87h-1.87zM57.96 50.48h1.87v1.87h-1.87zM0.00 52.35h1.87v1.87h-1.87zM3.74 52.35h5.61v1.87h-5.61zM11.22 52.35h1.87v1.87h-1.87zM18.70 52.35h3.74v1.87h-3.74zM26.18 52.35h3.74v1.87h-3.74zM31.78 52.35h1.87v1.87h-1.87zM39.26 52.35h1.87v1.87h-1.87zM43.00 52.35h13.09v1.87h-13.09zM57.96 52.35h3.74v1.87h-3.74zM0.00 54.22h1.87v1.87h-1.87zM3.74 54.22h5.61v1.87h-5.61zM11.22 54.22h1.87v1.87h-1.87zM14.96 54.22h1.87v1.87h-1.87zM22.44 54.22h3.74v1.87h-3.74zM28.05 54.22h1.87v1.87h-1.87zM31.78 54.22h5.61v1.87h-5.61zM39.26 54.22h3.74v1.87h-3.74zM46.74 54.22h14.96v1.87h-14.96zM0.00 56.09h1.87v1.87h-1.87zM3.74 56.09h5.61v1.87h-5.61zM11.22 56.09h1.87v1.87h-1.87zM16.83 56.09h1.87v1.87h-1.87zM20.57 56.09h1.87v1.87h-1.87zM29.92 56.09h1.87v1.87h-1.87zM33.65 56.09h1.87v1.87h-1.87zM39.26 56.09h1.87v1.87h-1.87zM44.87 56.09h3.74v1.87h-3.74zM50.48 56.09h1.87v1.87h-1.87zM54.22 56.09h1.87v1.87h-1.87zM57.96 56.09h1.87v1.87h-1.87zM0.00 57.96h1.87v1.87h-1.87zM11.22 57.96h1.87v1.87h-1.87zM20.57 57.96h1.87v1.87h-1.87zM24.31 57.96h1.87v1.87h-1.87zM29.92 57.96h1.87v1.87h-1.87zM39.26 57.96h1.87v1.87h-1.87zM44.87 57.96h1.87v1.87h-1.87zM48.61 57.96h1.87v1.87h-1.87zM54.22 57.96h1.87v1.87h-1.87zM57.96 57.96h3.74v1.87h-3.74zM0.00 59.83h13.09v1.87h-13.09zM14.96 59.83h7.48v1.87h-7.48zM24.31 59.83h1.87v1.87h-1.87zM29.92 59.83h3.74v1.87h-3.74zM35.52 59.83h11.22v1.87h-11.22zM50.48 59.83h1.87v1.87h-1.87zM54.22 59.83h3.74v1.87h-3.74zM59.83 59.83h1.87v1.87h-1.87z" fill="#000"/></g>
<path d="M717.500 306.500H1054.500V908.500H717.500Z" stroke="#4C6A96" stroke-width="1" fill="none"/><path d="M886.500 286V303" stroke="#1A73E8" stroke-width="1.200" fill="none"/>
<path d="M713.0 301.0h9v9h-9zM882.0 301.0h9v9h-9zM1050.0 301.0h9v9h-9zM713.0 603.0h9v9h-9zM1050.0 603.0h9v9h-9zM713.0 904.0h9v9h-9zM882.0 904.0h9v9h-9zM1050.0 904.0h9v9h-9z" fill="#fff"/><path d="M714.0 302.0h7v7h-7zM883.0 302.0h7v7h-7zM1051.0 302.0h7v7h-7zM714.0 604.0h7v7h-7zM1051.0 604.0h7v7h-7zM714.0 905.0h7v7h-7zM883.0 905.0h7v7h-7zM1051.0 905.0h7v7h-7z" fill="#1A73E8"/><circle cx="886.500" cy="285.500" r="4.600" fill="#1A73E8"/>
</svg>
<div class="abs" style="left:605px;top:262px;width:32px;height:62px;border-radius:5px;background:#fff;box-shadow:0 1px 5px rgba(60,64,67,.18)"></div>
<svg class="ic" style="left:636px;top:273px" width="8" height="14" viewBox="0 0 8 14"><path d="M0 1.500L6 7L0 12.500Z" fill="#fff"/></svg>
<div class="abs" style="left:611px;top:271.500px;width:20px;height:13px;line-height:13px;font-size:11px;font-weight:bold;color:#111;text-align:center;letter-spacing:-0.5px">LT</div>
<svg class="ic" style="left:611px;top:282px" width="20" height="6" viewBox="0 0 20 6"><path d="M1 3.500Q3.250 0.500 5.500 3T10 3T14.500 3T19 2.500" fill="none" stroke="#4A90E2" stroke-width="1.500" stroke-linecap="round"/></svg>
<svg class="ic" style="left:611px;top:298px" width="20" height="20" viewBox="0 0 20 20"><circle cx="10" cy="10" r="10" fill="#2196F3"/><path d="M6 10.300L8.800 13L14 7.500" fill="none" stroke="#fff" stroke-width="1.800" stroke-linecap="round" stroke-linejoin="round"/></svg>
<div class="abs" style="left:1220px;top:547.5px;width:40px;height:126.5px;border-radius:20px;background:#F8FAFD;box-shadow:-1px 2px 5px rgba(60,64,67,.32),0 1px 2px rgba(60,64,67,.2)"></div>
<svg class="ic" style="left:1229.200px;top:559.700px" width="24" height="24" viewBox="0 0 20 20"><path d="M1.800 18V3.300Q1.800 1.800 3.300 1.800H16.700Q18.200 1.800 18.200 3.300V13.200Q18.200 14.700 16.700 14.700H5.100Z M3.400 14.400L4.500 13.200H16.700V3.300H3.300Z" fill="#1B5BC9" fill-rule="evenodd"/><path d="M10 5V11.400M6.800 8.200H13.200" stroke="#1B5BC9" stroke-width="1.600"/></svg>
<svg class="ic" style="left:1230px;top:600.500px" width="22" height="22" viewBox="0 0 20 20"><circle cx="10" cy="10" r="8.300" fill="none" stroke="#1B5BC9" stroke-width="1.600"/><circle cx="7" cy="7.900" r="1.250" fill="#1B5BC9"/><circle cx="13" cy="7.900" r="1.250" fill="#1B5BC9"/><path d="M5.600 11.300H14.400A4.400 4.400 0 0 1 5.600 11.300Z" fill="#1B5BC9"/></svg>
<svg class="ic" style="left:1229.200px;top:639.700px" width="24" height="24" viewBox="0 0 20 20"><path d="M1.800 18V3.300Q1.800 1.800 3.300 1.800H16.700Q18.200 1.800 18.200 3.300V13.200Q18.200 14.700 16.700 14.700H5.100Z M3.400 14.400L4.500 13.200H16.700V3.300H3.300Z" fill="#1B5BC9" fill-rule="evenodd"/><path d="M5.500 11.500V9.600L10.600 4.500L12.500 6.400L7.400 11.500Z M10 10.200H14.600V11.500H8.700Z" fill="#1B5BC9"/></svg>
<div class="abs" style="left:717px;top:917.5px;width:225.500px;height:42.500px;border-radius:8px;background:#fff;box-shadow:0 1px 3px rgba(60,64,67,.3),0 2px 6px rgba(60,64,67,.15)"></div>
<div class="abs" style="left:727px;top:924px;width:30px;height:30px;border-radius:15px;background:#E1EBFB"></div>
<svg class="ic" style="left:717px;top:917.5px" width="226" height="43" viewBox="717 917.500 226 43"><rect x="735" y="932.2" width="14" height="1.75" fill="#1A5CD0"/><rect x="735" y="944.2" width="14" height="1.75" fill="#1A5CD0"/><rect x="735" y="936" width="5.400" height="5.500" fill="#1A5CD0"/><rect x="743.2" y="940" width="5.8" height="1.5" fill="#1A5CD0"/><rect x="769" y="932.2" width="14" height="1.75" fill="#80868B"/><rect x="769" y="944.2" width="14" height="1.75" fill="#80868B"/><rect x="769" y="936" width="5.700" height="5.500" fill="#444746"/><rect x="777.2" y="936" width="5.8" height="1.5" fill="#80868B"/><rect x="777.2" y="940" width="5.8" height="1.5" fill="#80868B"/><rect x="803" y="932.2" width="14" height="1.75" fill="#80868B"/><rect x="803" y="944.2" width="14" height="1.75" fill="#80868B"/><rect x="803" y="936" width="5.700" height="5.500" fill="#444746"/><rect x="837" y="932.2" width="14" height="1.75" fill="#80868B"/><rect x="837" y="944.2" width="14" height="1.75" fill="#80868B"/><rect x="837" y="936.2" width="14" height="1.75" fill="#80868B"/><rect x="837" y="940.2" width="14" height="1.75" fill="#80868B"/><rect x="840" y="935" width="8" height="7.700" rx="0.800" fill="#444746"/><rect x="871" y="932.2" width="14" height="1.75" fill="#80868B"/><rect x="871" y="944.2" width="14" height="1.75" fill="#80868B"/><rect x="871" y="936.2" width="14" height="1.75" fill="#80868B"/><rect x="871" y="940.2" width="14" height="1.75" fill="#80868B"/><rect x="874" y="935" width="8" height="7.700" fill="#3c4043"/><rect x="903" y="929.400" width="1" height="19.400" fill="#C7C7C7"/><circle cx="923" cy="933.8" r="1.600" fill="#444746"/><circle cx="923" cy="939" r="1.600" fill="#444746"/><circle cx="923" cy="944.2" r="1.600" fill="#444746"/></svg>
<div class="abs" style="left:1908px;top:639px;width:8px;height:162px;border-radius:4px;background:#DADCE0"></div>
</div></body></html>
